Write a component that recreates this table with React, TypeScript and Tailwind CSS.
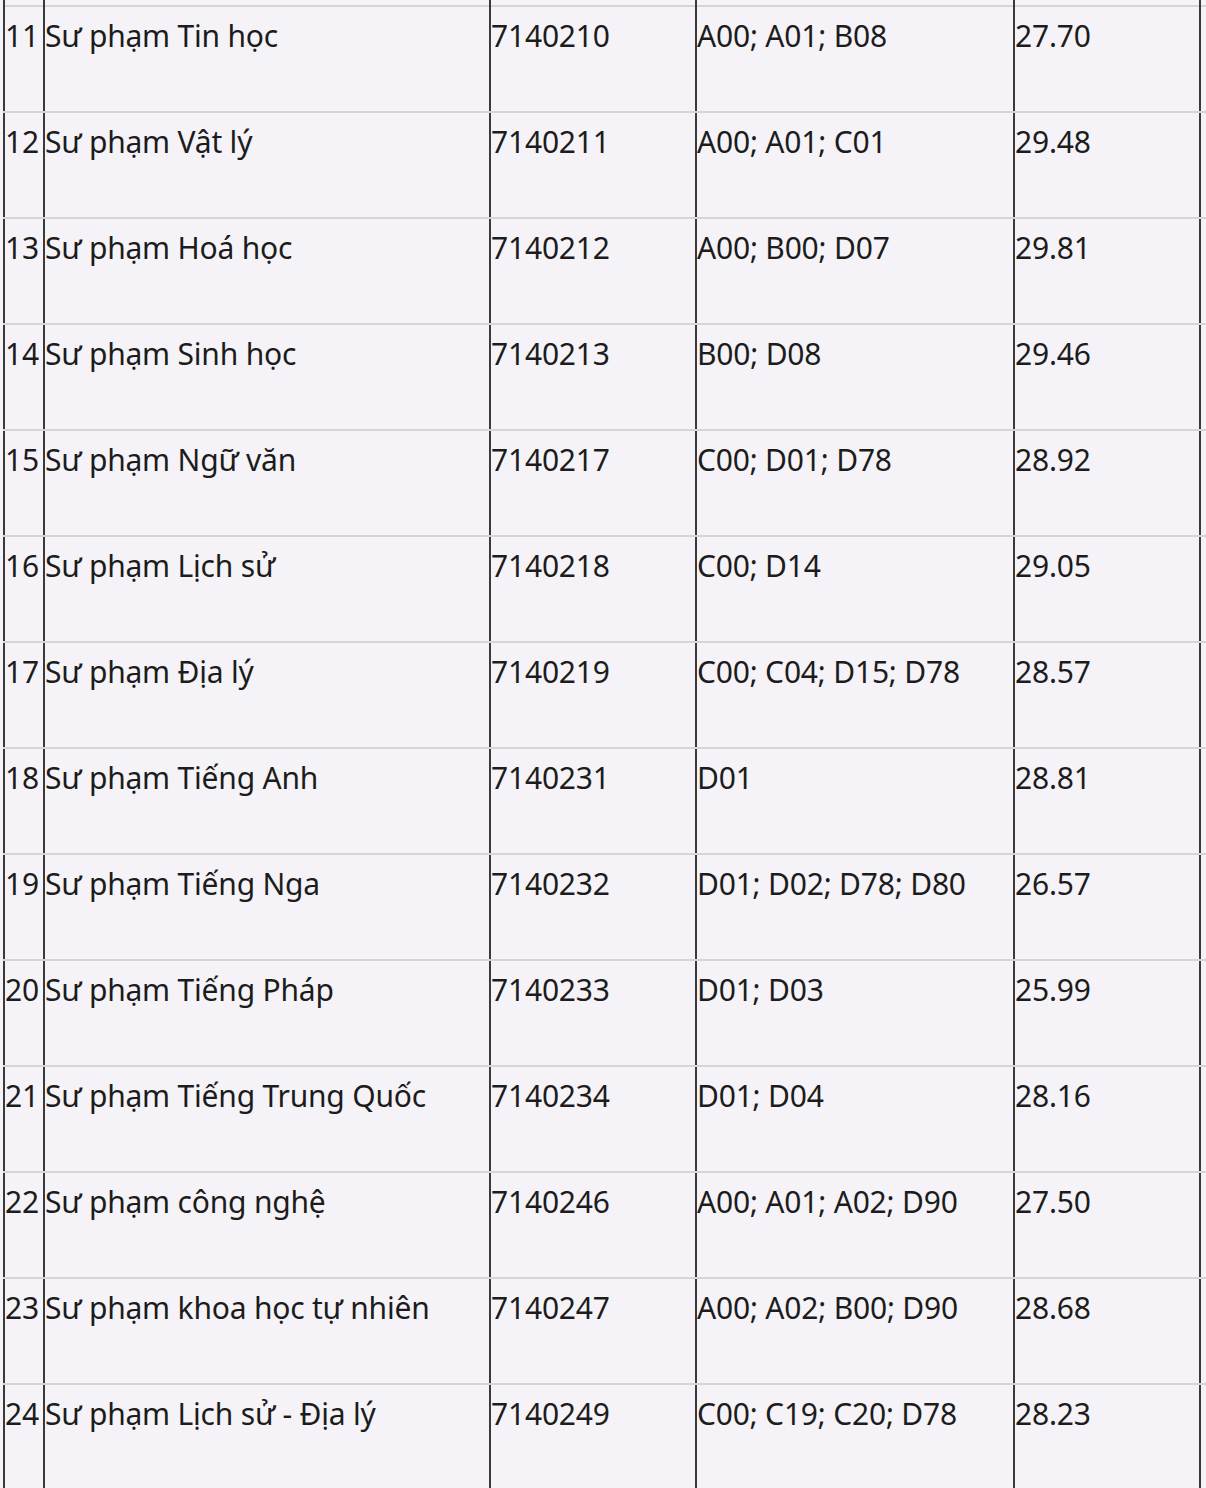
const ROWS = [
  ['11', 'Sư phạm Tin học', '7140210', 'A00; A01; B08', '27.70'],
  ['12', 'Sư phạm Vật lý', '7140211', 'A00; A01; C01', '29.48'],
  ['13', 'Sư phạm Hoá học', '7140212', 'A00; B00; D07', '29.81'],
  ['14', 'Sư phạm Sinh học', '7140213', 'B00; D08', '29.46'],
  ['15', 'Sư phạm Ngữ văn', '7140217', 'C00; D01; D78', '28.92'],
  ['16', 'Sư phạm Lịch sử', '7140218', 'C00; D14', '29.05'],
  ['17', 'Sư phạm Địa lý', '7140219', 'C00; C04; D15; D78', '28.57'],
  ['18', 'Sư phạm Tiếng Anh', '7140231', 'D01', '28.81'],
  ['19', 'Sư phạm Tiếng Nga', '7140232', 'D01; D02; D78; D80', '26.57'],
  ['20', 'Sư phạm Tiếng Pháp', '7140233', 'D01; D03', '25.99'],
  ['21', 'Sư phạm Tiếng Trung Quốc', '7140234', 'D01; D04', '28.16'],
  ['22', 'Sư phạm công nghệ', '7140246', 'A00; A01; A02; D90', '27.50'],
  ['23', 'Sư phạm khoa học tự nhiên', '7140247', 'A00; A02; B00; D90', '28.68'],
  ['24', 'Sư phạm Lịch sử - Địa lý', '7140249', 'C00; C19; C20; D78', '28.23'],
];

const COLS = ['w-[40px]', 'w-[446px]', 'w-[206px]', 'w-[318px]', 'w-[188px]'];

function Row({ cells, top }: { cells?: string[]; top?: boolean }) {
  return (
    <div
      className={`flex ${top ? 'h-[5px]' : 'h-[106px] border-t-2 border-[#d6d4d9]'}`}
    >
      {COLS.map((w, i) => (
        <div
          key={i}
          className={`${w} shrink-0 border-l-2 border-[#3a3a3a] pt-[10px] ${
            i === COLS.length - 1 ? 'border-r-2' : ''
          }`}
        >
          {cells && <span className="block whitespace-nowrap">{cells[i]}</span>}
        </div>
      ))}
    </div>
  );
}

export default function App() {
  return (
    <div
      className="h-[1488px] w-[1206px] overflow-hidden bg-[#f5f3f7] pl-[3px] text-[30px] leading-[38px] tracking-[-0.2px] text-[#1c1c1c]"
      style={{ fontFamily: '"Noto Sans", sans-serif' }}
    >
      <Row top />
      {ROWS.map((r) => (
        <Row key={r[0]} cells={r} />
      ))}
    </div>
  );
}
